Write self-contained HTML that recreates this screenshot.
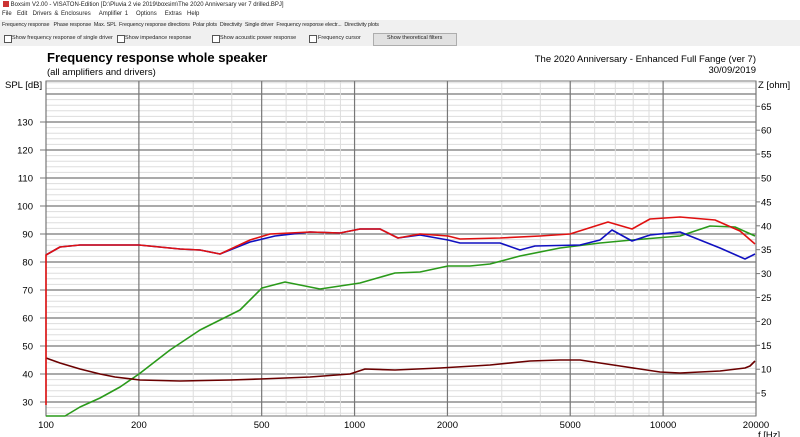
<!DOCTYPE html>
<html><head><meta charset="utf-8"><style>
body{margin:0;width:800px;height:437px;background:#fff;font-family:"Liberation Sans",sans-serif;overflow:hidden;position:relative}
.t{position:absolute;white-space:nowrap}
.s{font-size:6px;color:#222}
.cb{position:absolute;width:6px;height:6px;border:1px solid #555;background:#fff;top:35px}
</style></head><body>
<div class="t s" style="left:3px;top:1px"><span style="display:inline-block;width:6px;height:6px;background:#c33;vertical-align:-1px"></span> Boxsim V2.00 - VISATON-Edition [D:\Pluvia 2 vie 2019\boxsim\The 2020 Anniversary ver 7 drilled.BPJ]</div>
<div class="t s" style="left:2px;top:11px;word-spacing:1px">File &nbsp;Edit &nbsp;Drivers &amp; Enclosures &nbsp;&nbsp;Amplifier 1 &nbsp;&nbsp;Options &nbsp;&nbsp;Extras &nbsp;Help</div>
<div style="position:absolute;left:0;top:20px;width:800px;height:12px;background:#f0f0f0;border-bottom:1px solid #ddd"></div>
<div class="t s" style="left:2px;top:22px;font-size:5.4px;letter-spacing:-0.1px">Frequency response &nbsp;&nbsp;Phase response &nbsp;Max. SPL &nbsp;Frequency response directions &nbsp;Polar plots &nbsp;Directivity &nbsp;Single driver &nbsp;Frequency response electr... &nbsp;Directivity plots</div>
<div style="position:absolute;left:0;top:32px;width:800px;height:14px;background:#f0f0f0"></div>
<div class="cb" style="left:4px"></div><div class="t s" style="left:12px;top:35px;font-size:5.5px">Show frequency response of single driver</div>
<div class="cb" style="left:117px"></div><div class="t s" style="left:125px;top:35px;font-size:5.5px">Show impedance response</div>
<div class="cb" style="left:212px"></div><div class="t s" style="left:220px;top:35px;font-size:5.5px">Show acoustic power response</div>
<div class="cb" style="left:309px"></div><div class="t s" style="left:318px;top:35px;font-size:5.5px">Frequency cursor</div>
<div style="position:absolute;left:373px;top:33px;width:82px;height:11px;background:#e1e1e1;border:1px solid #adadad"></div>
<div class="t s" style="left:387px;top:35px;font-size:5.5px">Show theoretical filters</div>
<div class="t" style="left:47px;top:50px;font-size:13px;font-weight:bold">Frequency response whole speaker</div>
<div class="t" style="left:47px;top:67px;font-size:9.5px">(all amplifiers and drivers)</div>
<div class="t" style="right:44px;top:54px;font-size:9.5px">The 2020 Anniversary - Enhanced Full Fange (ver 7)</div>
<div class="t" style="right:44px;top:65px;font-size:9.5px">30/09/2019</div>
<svg id="g" width="800" height="437" style="position:absolute;left:0;top:0" font-family="Liberation Sans" font-size="9.5"></svg>
<script>
var s='',X=function(f){return 46+710*Math.log(f/100)/Math.log(200)};
for(var d=26;d<=144;d+=2){var y=122+(130-d)*2.8;if(y<81||y>416)continue;var maj=d%10==0;
s+='<line x1="46" x2="756" y1="'+y+'" y2="'+y+'" stroke="'+(maj?'#777':'#ddd')+'" stroke-width="'+(maj?1.2:1)+'"/>';
if(maj&&d<=130)s+='<text x="33" y="'+(y+3.5)+'" text-anchor="end">'+d+'</text><line x1="40" x2="46" y1="'+y+'" y2="'+y+'" stroke="#777"/>';}
var fs=[100,200,300,400,500,600,700,800,900,1000,2000,3000,4000,5000,6000,7000,8000,9000,10000,20000],mj=[100,200,500,1000,2000,5000,10000,20000];
fs.forEach(function(f){var x=X(f),m=mj.indexOf(f)>=0;s+='<line x1="'+x+'" x2="'+x+'" y1="81" y2="416" stroke="'+(m?'#777':'#ddd')+'" stroke-width="'+(m?1.2:1)+'"/>';if(m)s+='<text x="'+x+'" y="428" text-anchor="middle">'+f+'</text>';});
for(var z=5;z<=65;z+=5){var y=417-z*4.78;s+='<line x1="756" x2="760" y1="'+y+'" y2="'+y+'" stroke="#777"/><text x="761" y="'+(y+3.5)+'">'+z+'</text>';}
s+='<rect x="46" y="81" width="710" height="335" fill="none" stroke="#777"/>';
s+='<text x="5" y="88">SPL [dB]</text><text x="758" y="88">Z [ohm]</text><text x="758" y="438">f [Hz]</text>';
function P(c,p){return '<polyline fill="none" stroke="'+c+'" stroke-width="1.6" stroke-linejoin="round" points="'+p+'"/>';}
s+=P('#2a9a1a','46,416 65,416 80,407 100,398 120,387 139,374 170,350 200,330 240,310 262,288 285,282 320,289 360,283 395,273 420,272 448,266 470,266 490,264 520,256 560,248 600,243 632,240 680,236 710,226 735,227 755,236');
s+=P('#6b0000','46,358 60,363 80,369 100,374 115,377 140,380 180,381 230,380 260,379 310,377 350,374 365,369 395,370 440,368 490,365 530,361 560,360 580,360 620,366 660,372 680,373 720,371 745,368 750,366 755,361');
s+=P('#1010c0','46,255 60,247 80,245 120,245 139,245 180,249 200,250 220,254 250,242 275,236 310,232 340,233 360,229 380,229 398,238 420,235 448,240 460,243 500,243 520,250 535,246 580,245 600,240 612,230 632,241 650,235 680,232 690,236 720,248 745,259 755,254');
s+=P('#e01010','46,405 46,255 60,247 80,245 120,245 139,245 180,249 200,250 220,254 250,240 270,234 310,232 340,233 360,229 380,229 398,238 420,234 448,236 460,239 500,238 540,236 570,234 608,222 632,229 650,219 680,217 715,220 740,231 755,244');
document.getElementById('g').innerHTML=s;
</script>
</body></html>
